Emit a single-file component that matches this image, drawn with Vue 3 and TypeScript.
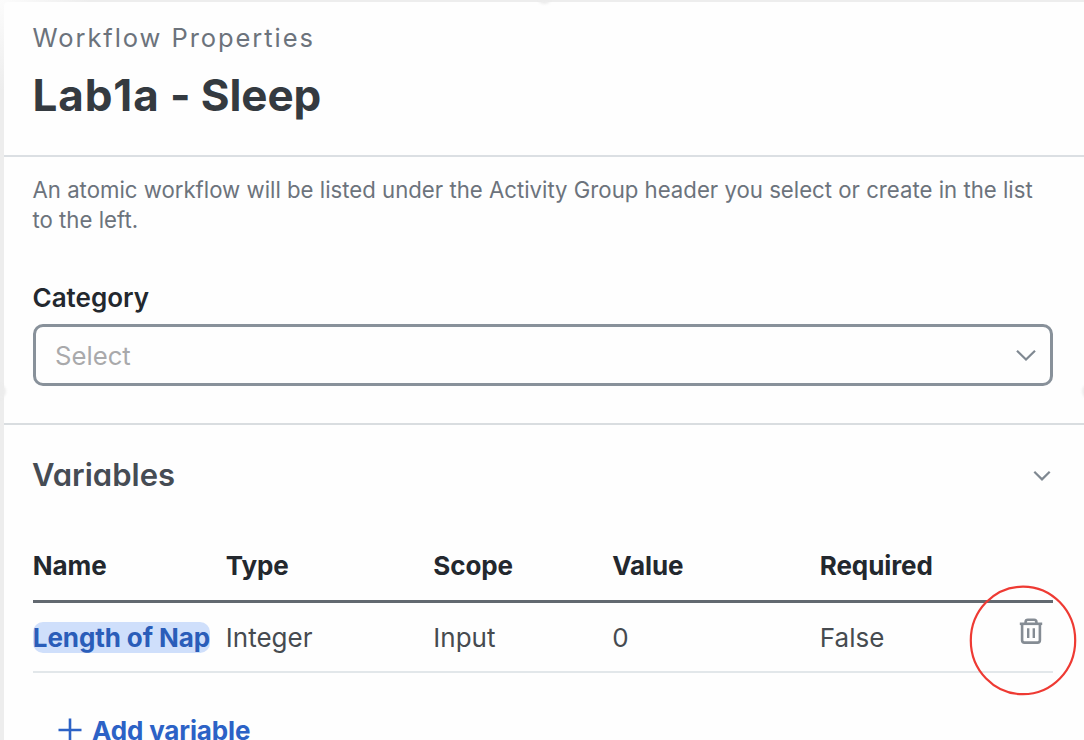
<script setup lang="ts">
interface WorkflowVariable {
  name: string
  type: string
  scope: string
  value: string
  required: string
}

const columns: string[] = ['Name', 'Type', 'Scope', 'Value', 'Required']
const variables: WorkflowVariable[] = [
  { name: 'Length of Nap', type: 'Integer', scope: 'Input', value: '0', required: 'False' },
]
</script>

<template>
  <div class="page">
    <main class="panel">
      <header class="header">
        <div class="eyebrow"><span>Workflow Properties</span></div>
        <h1 class="title"><span class="code">Lab1a</span> - Sleep</h1>
      </header>

      <section class="category">
        <p class="description">
          An atomic workflow will be listed under the Activity Group header you select or create in the list<br />to the left.
        </p>
        <div class="label"><span>Category</span></div>
        <div class="select">
          <span class="placeholder">Select</span>
          <svg class="select-chevron" width="20" height="12" viewBox="0 0 20 12">
            <path d="M1 1.8 L10 10.5 L19 1.8" />
          </svg>
        </div>
      </section>

      <section class="variables">
        <div class="section-head">
          <h2 class="section-title"><span>Variables</span></h2>
          <svg class="section-chevron" width="18" height="11" viewBox="0 0 18 11">
            <path d="M1.3 1.8 L9 9.4 L16.7 1.8" />
          </svg>
        </div>

        <div class="row head">
          <span v-for="c in columns" :key="c"><b>{{ c }}</b></span>
        </div>
        <div v-for="v in variables" :key="v.name" class="row item">
          <span><mark class="name">{{ v.name }}</mark></span>
          <span>{{ v.type }}</span>
          <span>{{ v.scope }}</span>
          <span>{{ v.value }}</span>
          <span>{{ v.required }}</span>
          <span class="actions">
            <svg class="trash" width="24" height="28" viewBox="0 0 24 28">
              <path d="M0.8 6.8 H23.2" />
              <path d="M6.6 6.4 V5 Q6.6 2.7 8.9 2.7 H15.1 Q17.4 2.7 17.4 5 V6.4" />
              <path d="M3.1 7 V23.2 Q3.1 25.6 5.5 25.6 H18.5 Q20.9 25.6 20.9 23.2 V7" />
              <path class="slot" d="M9.2 11.2 V21 M14.8 11.2 V21" />
            </svg>
            <svg class="ring" width="110" height="112" viewBox="0 0 110 112">
              <ellipse cx="55" cy="56.4" rx="52.2" ry="53.8" />
            </svg>
          </span>
        </div>

        <div class="add">
          <svg width="24" height="24" viewBox="0 0 24 24">
            <path d="M0.5 12 H23.5 M12 0.5 V23.5" />
          </svg>
          <span>Add variable</span>
        </div>
      </section>
    </main>
    <i class="handle top"></i>
    <i class="handle left"></i>
    <i class="handle right"></i>
  </div>
</template>

<style>
body {
  overflow: hidden;
}
</style>

<style scoped>
.page {
  position: relative;
  box-sizing: border-box;
  width: 1084px;
  height: 740px;
  padding: 2px 0 0 4px;
  overflow: hidden;
  background: radial-gradient(circle at 0 0, #fcfcfc 0, #ededed 90px);
  font-family: Inter, "Liberation Sans", sans-serif;
  color: #23282e;
}
.panel {
  height: 738px;
  overflow: hidden;
  background: #fefefe;
  border-top-left-radius: 4px;
}
.header {
  box-sizing: border-box;
  height: 155px;
  padding: 18px 29px 0;
  border-bottom: 2px solid #dbdfe3;
}
.eyebrow {
  margin-left: -0.5px;
  font-size: 25.5px;
  line-height: 36px;
  letter-spacing: 1.93px;
  color: #6c737c;
}
.title {
  margin: 10px 0 0 -0.5px;
  font-size: 44px;
  line-height: 58px;
  font-weight: 700;
  font-kerning: none;
  letter-spacing: -0.1px;
  color: #343a40;
}
.title .code {
  letter-spacing: 0.9px;
}
.category {
  box-sizing: border-box;
  height: 268px;
  padding: 18px 31px 0 29px;
  border-bottom: 2px solid #d9dde0;
}
.description {
  margin: 0 0 0 -0.5px;
  font-size: 22.2px;
  line-height: 29.5px;
  white-space: nowrap;
  color: #6c737c;
}
.label {
  margin: 46px 0 0 -0.5px;
  font-size: 26px;
  line-height: 36px;
  font-weight: 600;
}
.select {
  display: flex;
  align-items: center;
  justify-content: space-between;
  box-sizing: border-box;
  height: 62px;
  margin-top: 8px;
  padding: 0 14px 0 19px;
  border: 3px solid #88919a;
  border-radius: 10px;
}
.placeholder {
  font-size: 25.7px;
  color: #a9a9ab;
}
svg {
  fill: none;
  stroke: #7f8891;
  stroke-width: 2.2;
}
.variables {
  padding: 30px 31px 0 29px;
}
.section-head {
  display: flex;
  align-items: center;
  justify-content: space-between;
  height: 40px;
  padding-right: 2px;
}
.section-title {
  margin: 0 0 0 -1px;
  font-size: 31px;
  line-height: 40px;
  font-weight: 600;
  font-feature-settings: "cv11";
  color: #464c54;
}
.row {
  display: grid;
  grid-template-columns: 193px 207.5px 179px 207.5px 1fr 60px;
  align-items: center;
  box-sizing: border-box;
  font-size: 26px;
  white-space: nowrap;
}
.row > span {
  margin-left: -0.2px;
}
.head {
  height: 72px;
  margin-top: 36px;
  border-bottom: 3px solid #626970;
}
.head b {
  font-weight: 650;
  letter-spacing: -0.1px;
}
.item {
  height: 70px;
  border-bottom: 2px solid #e2e7ea;
  color: #464b50;
}
.name {
  display: inline-block;
  height: 31px;
  line-height: 31px;
  border-radius: 10px;
  background: #cfdffb;
  color: #2a5db9;
  font-weight: 650;
  letter-spacing: -0.1px;
}
.actions {
  position: relative;
  display: flex;
  justify-content: flex-end;
  padding: 0 10px 12px 0;
}
.trash {
  stroke: #858c94;
  stroke-width: 2.6;
}
.trash .slot {
  stroke-width: 2.4;
}
.ring {
  position: absolute;
  right: -25px;
  top: -33px;
  stroke: #ee3a33;
  stroke-width: 2.2;
}
.add {
  display: flex;
  align-items: center;
  gap: 10px;
  height: 36px;
  margin-top: 39px;
  padding-left: 25px;
  font-size: 26px;
  font-weight: 650;
  letter-spacing: -0.15px;
  color: #2c62c6;
}
.add svg {
  stroke: #2c62c6;
  stroke-width: 2.6;
}
.handle {
  position: absolute;
  background: #ececec;
  border-radius: 50%;
  filter: blur(1px);
}
.top {
  left: 537px;
  top: -11px;
  width: 15px;
  height: 15px;
}
.left {
  left: -9px;
  top: 384px;
  width: 15px;
  height: 15px;
}
.right {
  left: 1082px;
  top: 384px;
  width: 15px;
  height: 15px;
}
</style>
